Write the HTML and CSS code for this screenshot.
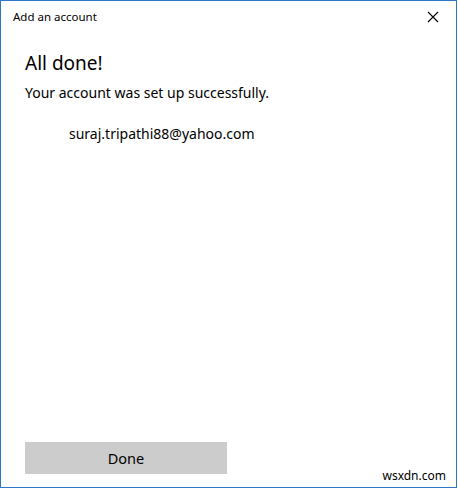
FILE: index.html
```html
<!DOCTYPE html>
<html lang="en">
<head>
<meta charset="utf-8">
<title>Add an account</title>
<link rel="stylesheet" href="styles.css">
</head>
<body>
<div class="window">
  <div class="titlebar">
    <span class="title">Add an account</span>
    <button class="close" aria-label="Close">
      <svg width="12" height="12" viewBox="0 0 12 12"><path d="M1 1 L11 11 M11 1 L1 11" stroke="#000" stroke-width="1.1" fill="none"/></svg>
    </button>
  </div>
  <div class="content">
    <h1 class="heading">All done!</h1>
    <p class="message">Your account was set up successfully.</p>
    <p class="email">suraj.tripathi88@yahoo.com</p>
  </div>
  <div class="footer">
    <button class="done">Done</button>
  </div>
  <span class="watermark">wsxdn.com</span>
</div>
</body>
</html>
```

FILE: styles.css
```css
html, body {
  margin: 0;
  padding: 0;
  background: #ffffff;
}
body {
  font-family: "Noto Sans", "Open Sans", "Liberation Sans", sans-serif;
  color: #000;
}
.window {
  position: relative;
  box-sizing: border-box;
  width: 457px;
  height: 488px;
  border: 1px solid #2b78c8;
  background: #fff;
  display: flex;
  flex-direction: column;
}
.titlebar {
  height: 31px;
  display: flex;
  align-items: center;
  justify-content: space-between;
}
.title {
  padding-left: 12px;
  font-size: 11.5px;
  color: #000;
}
.close {
  width: 46px;
  height: 31px;
  border: 0;
  background: transparent;
  padding: 0;
  display: flex;
  align-items: center;
  justify-content: center;
}
.content {
  flex: 1;
  padding: 0 24px;
}
.heading {
  margin: 17px 0 0;
  font-size: 19px;
  font-weight: 400;
  line-height: 28px;
}
.message {
  margin: 6px 0 0;
  font-size: 14px;
  line-height: 20px;
}
.email {
  margin: 21px 0 0 44px;
  font-size: 14px;
  line-height: 20px;
}
.footer {
  padding: 0 0 13px 24px;
}
.done {
  width: 202px;
  height: 32px;
  border: 0;
  background: #cccccc;
  font-family: inherit;
  font-size: 14.5px;
  color: #000;
  padding: 0;
}
.watermark {
  position: absolute;
  right: 10px;
  bottom: 3px;
  font-size: 12px;
  color: #000;
}
```
